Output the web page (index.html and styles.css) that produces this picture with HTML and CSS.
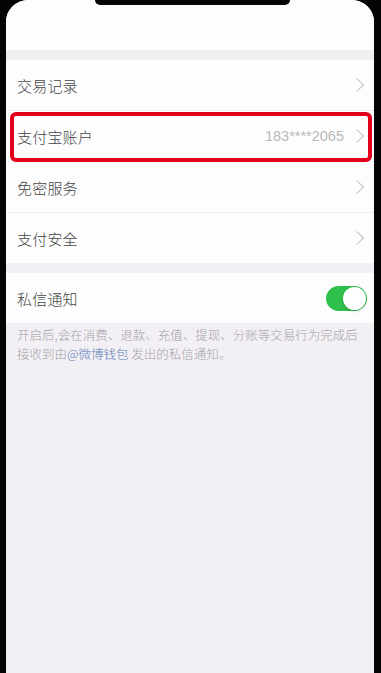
FILE: index.html
```html
<!DOCTYPE html>
<html>
<head>
  <meta charset="utf-8">
  <title>钱包设置</title>
  <link rel="stylesheet" href="styles.css">
</head>
<body>
  <div class="phone">
    <div class="screen">
      <div class="notch"></div>
      <div class="nav-bar"></div>

      <div class="group">
        <div class="cell">
          <span class="cell-label">交易记录</span>
          <span class="chevron"></span>
        </div>
        <div class="cell cell-marked">
          <span class="cell-label">支付宝账户</span>
          <span class="cell-value">183****2065</span>
          <span class="chevron"></span>
          <div class="highlight"></div>
        </div>
        <div class="cell">
          <span class="cell-label">免密服务</span>
          <span class="chevron"></span>
        </div>
        <div class="cell">
          <span class="cell-label">支付安全</span>
          <span class="chevron"></span>
        </div>
      </div>

      <div class="group">
        <div class="cell">
          <span class="cell-label">私信通知</span>
          <div class="toggle-switch active">
            <div class="toggle-knob"></div>
          </div>
        </div>
      </div>

      <div class="footnote">
        <p>开启后,会在消费、退款、充值、提现、分账等交易行为完成后</p>
        <p>接收到由<span class="mention">@微博钱包</span> 发出的私信通知。</p>
      </div>
    </div>
  </div>
</body>
</html>
```

FILE: styles.css
```css
body {
  margin: 0;
  padding: 0;
  width: 381px;
  height: 673px;
  background: #050505;
  font-family: "Noto Sans CJK SC", "Noto Sans", sans-serif;
  overflow: hidden;
}

.phone {
  height: 100%;
  padding: 0 7px 0 6px;
  box-sizing: border-box;
}

.screen {
  position: relative;
  height: 100%;
  background: #f3f0f5;
  border-radius: 22px 22px 0 0;
  overflow: hidden;
  display: flex;
  flex-direction: column;
}

.notch {
  position: absolute;
  top: 0;
  left: 89px;
  width: 195px;
  height: 5px;
  background: #050505;
  border-radius: 0 0 8px 8px;
}

.nav-bar {
  height: 50px;
  background: #fdfdfd;
  flex-shrink: 0;
}

.group {
  margin-top: 10px;
  background: #fdfdfd;
}

.nav-bar + .group {
  border-top: 10px solid #efeef1;
  margin-top: 0;
}

.cell {
  position: relative;
  height: 50px;
  display: flex;
  align-items: center;
  padding: 0 8px 0 11px;
  border-bottom: 1px solid #efeff1;
}

.cell:last-child {
  border-bottom: none;
}

.cell-label {
  flex: 1;
  font-size: 15px;
  font-weight: 300;
  color: #444;
  letter-spacing: 0.2px;
}

.cell-value {
  font-family: "Liberation Sans", sans-serif;
  font-size: 14.5px;
  color: #b9b9b9;
  margin-right: 8px;
}

.chevron {
  width: 9px;
  height: 9px;
  border-top: 1.4px solid #c2c2c2;
  border-right: 1.4px solid #c2c2c2;
  transform: rotate(45deg);
  margin-right: 4px;
}

.highlight {
  position: absolute;
  top: 1px;
  bottom: -1px;
  left: 4px;
  right: 2px;
  border: 4px solid #e2001b;
  border-radius: 6px;
}

.toggle-switch {
  width: 41px;
  height: 25px;
  border-radius: 13px;
  background: #e5e5ea;
  position: relative;
  margin-right: -1px;
}

.toggle-switch.active {
  background: #2fc04c;
}

.toggle-knob {
  position: absolute;
  top: 1px;
  left: 1px;
  width: 23px;
  height: 23px;
  border-radius: 50%;
  background: #fff;
  box-shadow: 0 1px 3px rgba(0, 0, 0, 0.2);
}

.toggle-switch.active .toggle-knob {
  left: 17px;
}

.footnote {
  padding: 3px 8px 0 11px;
  font-size: 12.5px;
  font-weight: 300;
  line-height: 18.5px;
  color: #a3a1a6;
}

.footnote p {
  margin: 0;
  white-space: nowrap;
}

.mention {
  color: #5b7eb6;
}
```
